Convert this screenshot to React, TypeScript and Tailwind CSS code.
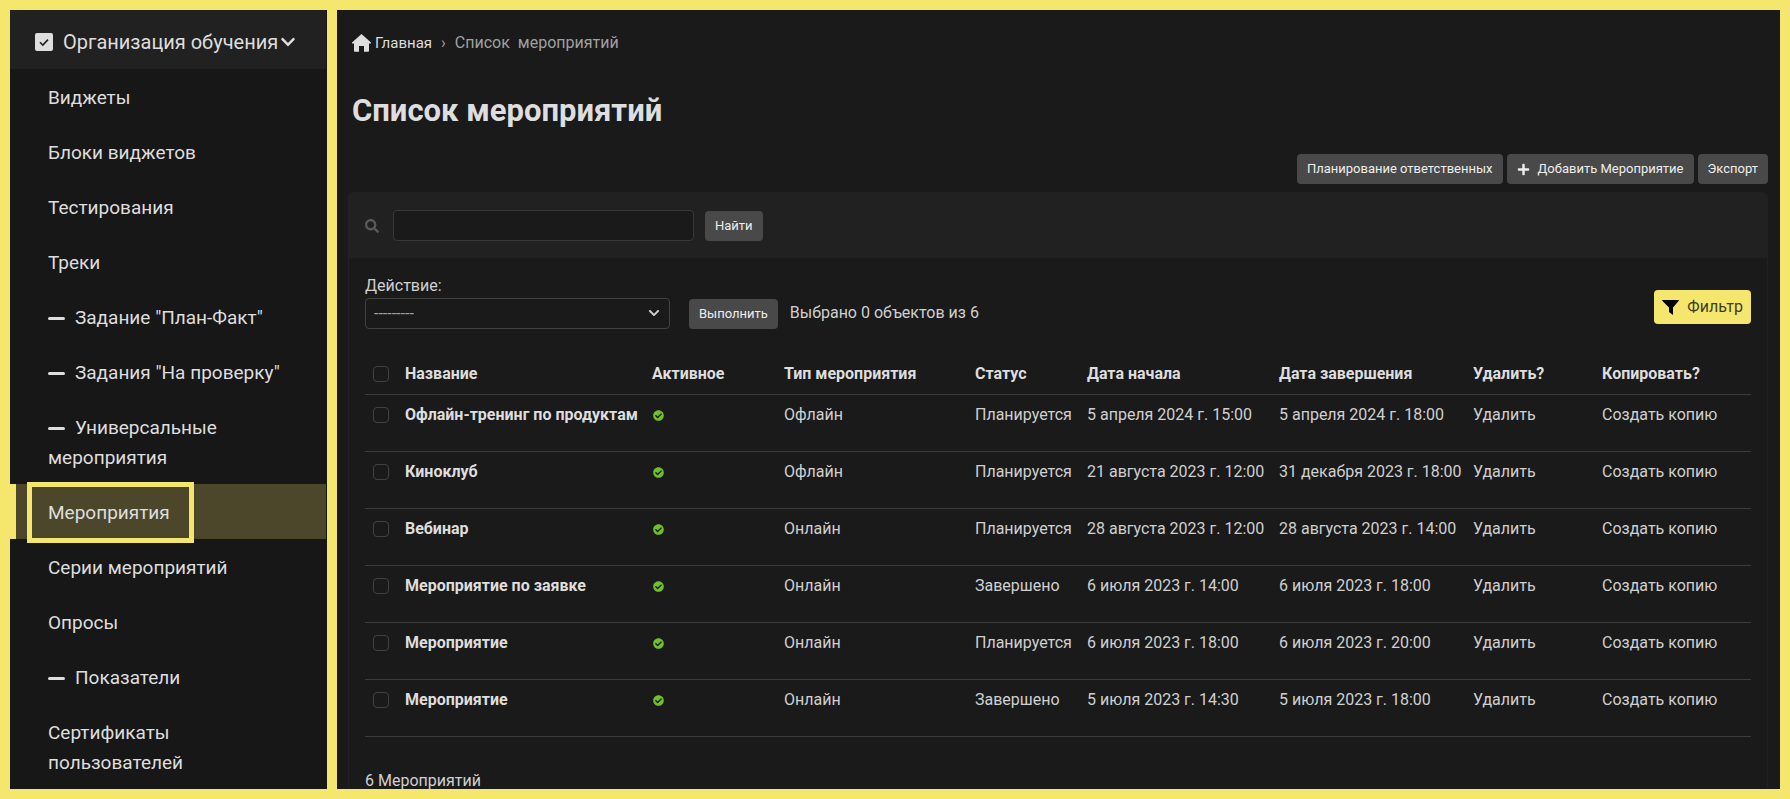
import { useState } from "react";
import type { ReactNode } from "react";
import { FaCheckCircle, FaChevronDown, FaPlus, FaSearch } from "react-icons/fa";

interface MenuItem {
  title: string;
  dash?: boolean;
  active?: boolean;
}

interface EventRow {
  id: number;
  name: string;
  type: string;
  status: string;
  start: string;
  end: string;
}

const menuItems: MenuItem[] = [
  { title: "Виджеты" },
  { title: "Блоки виджетов" },
  { title: "Тестирования" },
  { title: "Треки" },
  { title: 'Задание "План-Факт"', dash: true },
  { title: 'Задания "На проверку"', dash: true },
  { title: "Универсальные мероприятия", dash: true },
  { title: "Мероприятия", active: true },
  { title: "Серии мероприятий" },
  { title: "Опросы" },
  { title: "Показатели", dash: true },
  { title: "Сертификаты пользователей" },
];

const events: EventRow[] = [
  { id: 1, name: "Офлайн-тренинг по продуктам", type: "Офлайн", status: "Планируется", start: "5 апреля 2024 г. 15:00", end: "5 апреля 2024 г. 18:00" },
  { id: 2, name: "Киноклуб", type: "Офлайн", status: "Планируется", start: "21 августа 2023 г. 12:00", end: "31 декабря 2023 г. 18:00" },
  { id: 3, name: "Вебинар", type: "Онлайн", status: "Планируется", start: "28 августа 2023 г. 12:00", end: "28 августа 2023 г. 14:00" },
  { id: 4, name: "Мероприятие по заявке", type: "Онлайн", status: "Завершено", start: "6 июля 2023 г. 14:00", end: "6 июля 2023 г. 18:00" },
  { id: 5, name: "Мероприятие", type: "Онлайн", status: "Планируется", start: "6 июля 2023 г. 18:00", end: "6 июля 2023 г. 20:00" },
  { id: 6, name: "Мероприятие", type: "Онлайн", status: "Завершено", start: "5 июля 2023 г. 14:30", end: "5 июля 2023 г. 18:00" },
];

const headers = ["Название", "Активное", "Тип мероприятия", "Статус", "Дата начала", "Дата завершения", "Удалить?", "Копировать?"];

function ToolButton({ children }: { children: ReactNode }) {
  return (
    <button type="button" className="flex h-[30px] items-center rounded-sm bg-[#494949] px-[10px] text-[13px] text-[#eeeeee] hover:bg-[#555555]">
      {children}
    </button>
  );
}

function Checkbox({ label, checked, onChange }: { label: string; checked: boolean; onChange: () => void }) {
  return (
    <input
      type="checkbox"
      aria-label={label}
      checked={checked}
      onChange={onChange}
      className="block size-4 appearance-none rounded-sm border border-[#424242] checked:bg-[#f5e76e]"
    />
  );
}

function Sidebar() {
  return (
    <nav className="w-[317px] shrink-0 overflow-hidden bg-[#171717] pr-px text-[19px] leading-[30px] text-[#dedede]">
      <button type="button" className="flex h-[59px] w-full items-center bg-[#212121] pt-[5px] pl-[25px] text-left text-xl">
        <svg viewBox="0 0 18 18" className="mr-[10px] size-[18px]" aria-hidden="true">
          <rect width="18" height="18" rx="2" fill="#dedede" />
          <path d="M5 9.2 7.8 12 13 6.6" fill="none" stroke="#212121" strokeWidth="1.6" />
        </svg>
        Организация обучения
        <FaChevronDown className="ml-[2px] size-4" />
      </button>
      <ul>
        {menuItems.map((item) => (
          <li key={item.title}>
            <a
              href="#"
              className={
                item.active
                  ? "relative block border-l-[6px] border-[#f5e76e] bg-[#4c472b] pt-[14px] pr-8 pb-[11px] pl-8"
                  : "block pt-[14px] pr-6 pb-[11px] pl-[38px] hover:bg-[#212121]"
              }
            >
              {item.active && <span className="absolute -top-[2px] left-[11px] h-[61px] w-[167px] border-[5px] border-[#f5e76e]" />}
              {item.dash && <span className="mr-[10px] inline-block h-[3px] w-[17px] rounded-full bg-[#dedede] align-middle" />}
              {item.title}
            </a>
          </li>
        ))}
      </ul>
    </nav>
  );
}

export default function App() {
  const [selected, setSelected] = useState<number[]>([]);
  const allSelected = selected.length === events.length;

  const toggle = (id: number) => {
    setSelected(selected.includes(id) ? selected.filter((s) => s !== id) : [...selected, id]);
  };

  return (
    <div className="flex h-screen gap-[10px] overflow-hidden bg-[#f5e76e] p-[10px] font-[Roboto,sans-serif]">
      <Sidebar />

      <main className="min-w-0 flex-1 overflow-hidden bg-[#1a1a1a] pr-3 pl-[11px] text-base leading-6 text-[#d0d0d0]">
        <div className="flex items-center pt-[21px] pl-1">
          <a href="#" className="flex items-center gap-1 text-[15px] text-[#dedede]">
            <svg viewBox="0 0 19 18" className="h-[18px] w-[19px]" fill="currentColor" aria-hidden="true">
              <path d="M9.5 0 19 8.6v.9h-2V17q0 .8-.8.8H12V12H7v5.8H2.8Q2 17.800 2 17V9.500H0v-.9Z" />
            </svg>
            Главная
          </a>
          <span className="mx-[9px] text-[#a0a0a0]">›</span>
          <span className="whitespace-pre text-[#a0a0a0]">Список  мероприятий</span>
        </div>

        <h1 className="mt-9 pl-1 text-[31px] leading-10 font-bold text-[#dedede]">Список мероприятий</h1>

        <div className="mt-[23px] flex justify-end gap-1">
          <ToolButton>Планирование ответственных</ToolButton>
          <ToolButton>
            <FaPlus className="mr-2 size-[13px]" />
            Добавить Мероприятие
          </ToolButton>
          <ToolButton>Экспорт</ToolButton>
        </div>

        <section className="mt-2 rounded-t-md border border-[#212121]">
          <form className="flex h-[65px] items-center bg-[#212121] pl-4" onSubmit={(e) => e.preventDefault()}>
            <label htmlFor="search" aria-label="Поиск" className="mr-[14px]">
              <FaSearch className="size-[14px] text-[#5a5a5a]" />
            </label>
            <input id="search" type="text" className="h-[31px] w-[301px] rounded-sm border border-[#383838] bg-[#1a1a1a] px-2" />
            <div className="ml-[11px]">
              <ToolButton>Найти</ToolButton>
            </div>
          </form>

          <div className="px-4 pt-4 pb-5">
            <div className="flex items-end">
              <div>
                <label htmlFor="action" className="block">
                  Действие:
                </label>
                <div className="relative">
                  <select id="action" className="block h-[31px] w-[305px] appearance-none rounded-sm border border-[#424242] bg-[#1a1a1a] px-2 text-base text-[#a0a0a0]">
                    <option>---------</option>
                  </select>
                  <FaChevronDown className="pointer-events-none absolute top-[9px] right-[10px] size-3" />
                </div>
              </div>
              <div className="ml-[19px]">
                <ToolButton>Выполнить</ToolButton>
              </div>
              <span className="mb-1 ml-3">Выбрано {selected.length} объектов из 6</span>
              <button type="button" className="mb-[5px] ml-auto flex h-[34px] items-center gap-2 rounded-sm bg-[#f5e76e] px-2 text-[#3f3c22]">
                <svg viewBox="0 0 17 15" className="h-[15px] w-[17px]" aria-hidden="true">
                  <path d="M.5 0h16q.5 0 .3.800L11 7.500V15L7 12V7.500L.2.800Q0 0 .5 0Z" />
                </svg>
                Фильтр
              </button>
            </div>

            <table className="mt-[23px] w-full table-fixed text-left">
              <colgroup>
                <col className="w-[32px]" />
                <col className="w-[247px]" />
                <col className="w-[132px]" />
                <col className="w-[191px]" />
                <col className="w-[112px]" />
                <col className="w-[192px]" />
                <col className="w-[194px]" />
                <col className="w-[129px]" />
                <col className="w-[157px]" />
              </colgroup>
              <thead>
                <tr className="h-[42px] border-b border-[#3c3c3c] text-[#dedede]">
                  <th className="pt-[3px] pl-2">
                    <Checkbox label="Выбрать все" checked={allSelected} onChange={() => setSelected(allSelected ? [] : events.map((e) => e.id))} />
                  </th>
                  {headers.map((header) => (
                    <th key={header} className="pt-[3px] pl-2 font-bold">
                      {header}
                    </th>
                  ))}
                </tr>
              </thead>
              <tbody>
                {events.map((event) => (
                  <tr key={event.id} className="h-[57px] border-b border-[#3c3c3c] align-top whitespace-nowrap">
                    <td className="pt-3 pl-2">
                      <Checkbox label={event.name} checked={selected.includes(event.id)} onChange={() => toggle(event.id)} />
                    </td>
                    <th scope="row" className="pt-2 pl-2 font-bold text-[#dedede]">
                      <a href="#">{event.name}</a>
                    </th>
                    <td className="pt-[15px] pl-[9px]">
                      <FaCheckCircle className="size-[11px] text-[#70bf2b]" />
                    </td>
                    <td className="pt-2 pl-2">{event.type}</td>
                    <td className="pt-2 pl-2">{event.status}</td>
                    <td className="pt-2 pl-2">{event.start}</td>
                    <td className="pt-2 pl-2">{event.end}</td>
                    <td className="pt-2 pl-2">
                      <a href="#">Удалить</a>
                    </td>
                    <td className="pt-2 pl-2">
                      <a href="#">Создать копию</a>
                    </td>
                  </tr>
                ))}
              </tbody>
            </table>

            <p className="mt-8">6 Мероприятий</p>
          </div>
        </section>
      </main>
    </div>
  );
}
